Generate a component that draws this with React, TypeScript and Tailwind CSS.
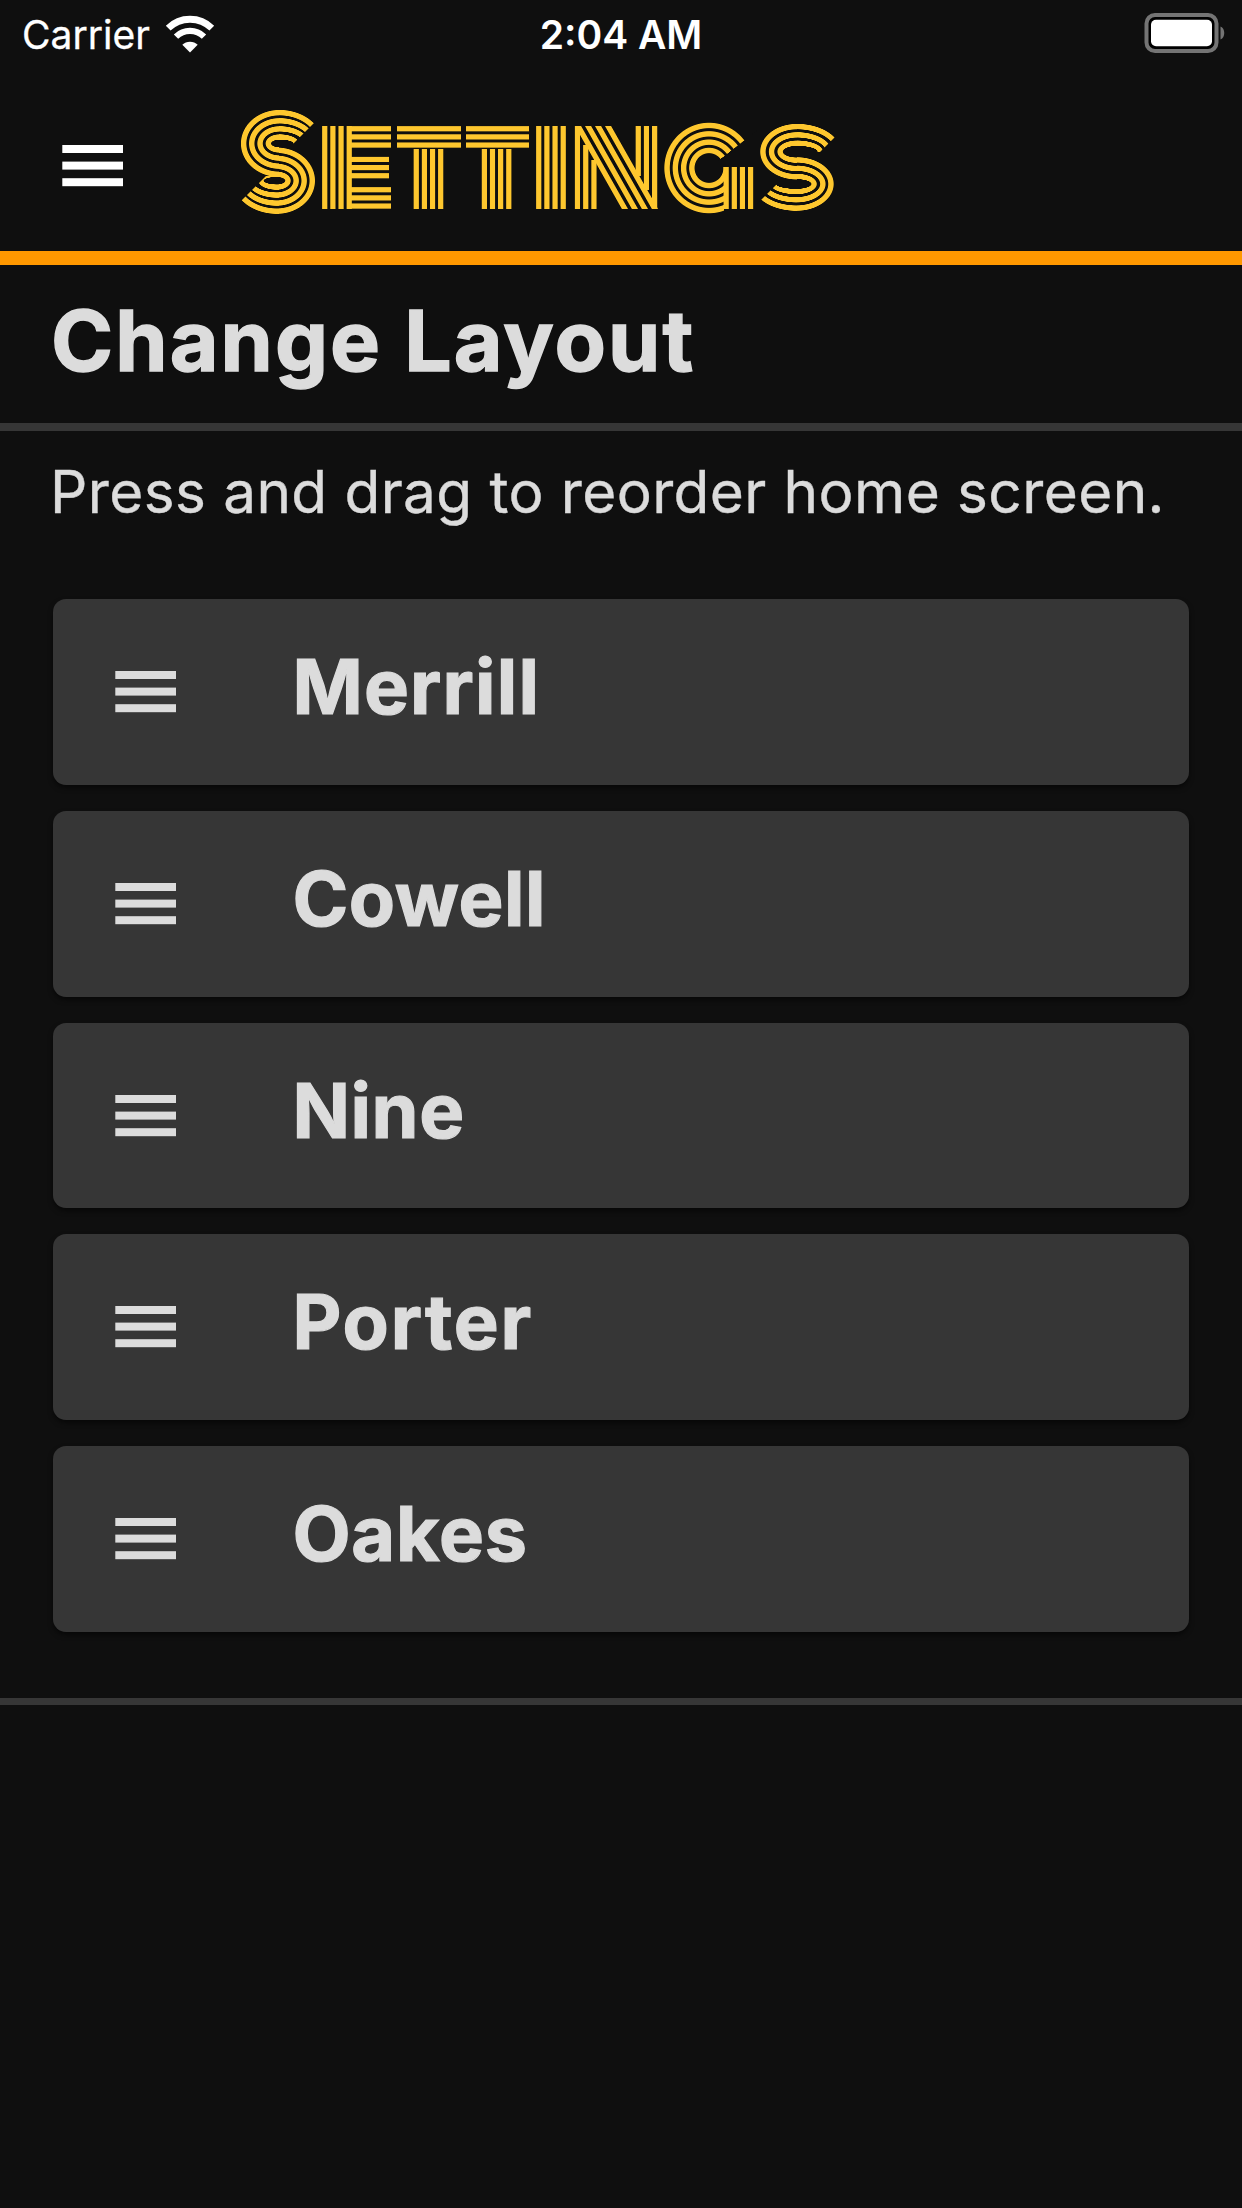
import React from "react";

const INK = "#fec72e";
const PAGE = "#0f0f0f";

/* ---- Striped lettering of the title, built from background layers ---- */

const OX = 238;
const OY = 106;

type Pair = [number, number];

function layer(image: string, x0: number, y0: number, x1: number, y1: number) {
  return `${image} ${x0 - OX}px ${y0 - OY}px / ${x1 - x0}px ${y1 - y0}px no-repeat`;
}

/* n parallel bars of 5.4px at a pitch of 8.15px, starting at `from` */
function bars(dir: "right" | "bottom", from: number, n: number) {
  const stops: string[] = [`transparent ${from - 0.4}px`];
  for (let i = 0; i < n; i++) {
    const a = from + i * 8.15;
    stops.push(`transparent ${a - 0.3}px`, `${INK} ${a + 0.6}px`, `${INK} ${a + 4.9}px`, `transparent ${a + 5.8}px`);
  }
  return `linear-gradient(to ${dir}, ${stops.join(", ")})`;
}

function columns(x: number, n: number, y0: number, y1: number) {
  const x0 = Math.floor(x) - 1;
  return layer(bars("right", x - x0, n), x0, y0, x0 + Math.ceil(n * 8.15) + 2, y1);
}

function rows(y: number, n: number, x0: number, x1: number) {
  const y0 = Math.floor(y) - 1;
  return layer(bars("bottom", y - y0, n), x0, y0, x1, y0 + Math.ceil(n * 8.15) + 2);
}

/* concentric elliptical rings given by centre-line radii, clipped to a box */
function rings(cx: number, cy: number, radii: Pair[], x0: number, y0: number, x1: number, y1: number) {
  const out: string[] = [];
  const disc = (rx: number, ry: number, c: string) =>
    layer(
      `radial-gradient(${rx + 0.4}px ${ry + 0.4}px at ${cx - x0}px ${cy - y0}px, ${c} calc(100% - 0.9px), transparent 100%)`,
      x0, y0, x1, y1,
    );
  for (const [rx, ry] of radii) {
    out.unshift(disc(rx + 2.7, ry + 2.7, INK));
    out.unshift(disc(rx - 2.7, ry - 2.7, PAGE));
  }
  return out;
}

/* page-coloured half plane: x + y beyond (or before) `sum` */
function cut(side: "after" | "before", sum: number, x0: number, y0: number, x1: number, y1: number) {
  const w = x1 - x0;
  const h = y1 - y0;
  const d = (sum - x0 - y0 - (w + h) / 2) / Math.SQRT2;
  const a = side === "after" ? "transparent" : PAGE;
  const b = side === "after" ? PAGE : "transparent";
  return layer(
    `linear-gradient(135deg, ${a} calc(50% + ${d - 0.5}px), ${b} calc(50% + ${d + 0.5}px))`,
    x0, y0, x1, y1,
  );
}

function diagonal() {
  const stops: string[] = [];
  [-13.05, -4.35, 4.35, 13.05].forEach((c, i) => {
    const gap = i === 0 ? "transparent" : PAGE;
    stops.push(`${gap} calc(50% + ${c - 3.1}px)`, `${INK} calc(50% + ${c - 2.2}px)`, `${INK} calc(50% + ${c + 2.2}px)`);
    stops.push(`${i === 3 ? "transparent" : PAGE} calc(50% + ${c + 3.1}px)`);
  });
  return layer(`linear-gradient(60.5deg, ${stops.join(", ")})`, 575, 126, 658, 209);
}

const titleLayers = [
  /* S */
  cut("after", 437, 279, 108, 320, 144),
  cut("before", 442, 238, 176, 277, 216),
  ...rings(279.3, 143.5, [[35.7, 30.8], [27.6, 22.6], [19.3, 14.5], [11, 6.3]], 238, 108, 279, 176),
  ...rings(279.3, 143.5, [[40.6, 30.8], [34, 22.6], [27, 14.5], [17, 6.3]], 279, 108, 320, 144),
  ...rings(277, 180.7, [[35.3, 30.4], [27.2, 22.3], [19.2, 14.2], [11, 6.2]], 279, 144, 320, 216),
  ...rings(277, 180.7, [[41, 30.4], [34, 22.3], [27, 14.2], [16, 6.2]], 238, 176, 279, 216),
  /* E */
  columns(322, 4, 126, 209),
  rows(126, 3, 350, 391),
  rows(156.7, 3, 350, 389),
  rows(187, 3, 350, 391),
  /* T T */
  rows(126, 3, 397, 461),
  columns(413.5, 4, 149, 209),
  rows(126, 3, 466, 529),
  columns(481.6, 4, 149, 209),
  /* I */
  columns(536, 4, 126, 209),
  /* N */
  diagonal(),
  columns(574.7, 1, 126, 209),
  columns(583, 1, 145, 209),
  columns(591.2, 1, 160, 209),
  columns(635.5, 1, 126, 176),
  columns(643.7, 1, 126, 190),
  columns(651.9, 1, 126, 209),
  /* G */
  columns(723.4, 4, 167, 209),
  layer(`conic-gradient(from 0deg at 0px 60px, transparent 51.5deg, ${PAGE} 52.5deg)`, 709, 108, 757, 167),
  ...rings(709, 168, [[42, 42.6], [33.7, 34.2], [25.4, 25.9], [17.2, 17.6]], 663, 108, 724, 216),
  ...rings(709, 168, [[42, 42.6], [33.7, 34.2], [25.4, 25.9], [17.2, 17.6]], 724, 108, 757, 167),
  /* S */
  cut("after", 972, 797, 120, 838, 152),
  cut("before", 961, 757, 181, 797, 216),
  ...rings(796.7, 151.7, [[33.8, 25], [25.2, 16.7], [16.6, 8.3]], 757, 120, 797, 181),
  ...rings(796.7, 151.7, [[41.3, 25], [32, 16.7], [23.6, 8.3]], 797, 120, 838, 152),
  ...rings(796.7, 184, [[34.3, 24], [26.2, 15.6], [17.4, 7.3]], 797, 152, 838, 216),
  ...rings(796.7, 184, [[41, 24], [32.4, 15.6], [23.4, 7.3]], 757, 181, 797, 216),
].join(", ");

function StripedTitle() {
  return (
    <h1
      className="ml-[115px] mt-[2px] h-[110px] w-[602px] whitespace-nowrap text-[108px] leading-[110px] font-black uppercase tracking-[3px] text-transparent [-webkit-text-stroke:70px_transparent]"
      style={{ background: titleLayers, backgroundClip: "text", WebkitBackgroundClip: "text" }}
    >
      Settings
    </h1>
  );
}

/* ---- Icons ---- */

function MenuIcon({ className }: { className?: string }) {
  return (
    <svg className={className} width="61" height="42" viewBox="0 0 61 42" fill="currentColor">
      <rect x="0.3" width="60.7" height="8" />
      <rect x="0.3" y="16.6" width="60.7" height="8" />
      <rect x="0.3" y="33.2" width="60.7" height="8" />
    </svg>
  );
}

function WifiIcon() {
  return (
    <svg width="50" height="38" viewBox="0 0 50 38" fill="none" stroke="#fff" className="-mt-[2px]">
      <path d="M3.2 13.2 A31 31 0 0 1 46.8 13.2" strokeWidth="6.8" />
      <path d="M11 21.6 A20 20 0 0 1 39 21.6" strokeWidth="6.2" />
      <path d="M25 37.5 L17.3 29.8 A11 11 0 0 1 32.7 29.8 Z" fill="#fff" stroke="none" />
    </svg>
  );
}

function BatteryIcon() {
  return (
    <svg width="82" height="42" viewBox="0 0 82 42" className="-mt-[3px]">
      <rect x="2.5" y="2" width="70" height="36" rx="8.5" fill="#000" stroke="#747474" strokeWidth="4" />
      <rect x="7" y="6.8" width="61" height="26.4" rx="5" fill="#fff" />
      <path d="M76.5 13.5 C81.5 15 81.5 25 76.5 26.5 Z" fill="#747474" />
    </svg>
  );
}

const colleges = [
  { name: "Merrill", tracking: "tracking-[1.2px]" },
  { name: "Cowell", tracking: "tracking-[0.6px]" },
  { name: "Nine", tracking: "tracking-[0.6px]" },
  { name: "Porter", tracking: "tracking-[1.9px]" },
  { name: "Oakes", tracking: "tracking-[0.8px]" },
];

export default function App() {
  return (
    <div className="flex h-[2208px] w-[1242px] flex-col overflow-hidden bg-[#0f0f0f] font-[Inter,sans-serif] text-[#dcdcdc]">
      <div className="grid h-[66px] shrink-0 grid-cols-3 items-center pt-[2px] text-[39px] leading-[66px] text-white">
        <div className="flex items-center pl-[22px]">
          <span className="w-[143px] [-webkit-text-stroke:0.3px_#fff]">Carrier</span>
          <WifiIcon />
        </div>
        <div className="text-center font-semibold">2:04 AM</div>
        <div className="flex justify-end pr-[16px]">
          <BatteryIcon />
        </div>
      </div>

      <header className="flex h-[199px] shrink-0 items-start border-b-[14px] border-[#ff9800] pl-[62px] pt-[38px]">
        <MenuIcon className="mt-[41px] shrink-0 text-white" />
        <StripedTitle />
      </header>

      <section className="flex h-[166px] shrink-0 items-start border-b-[8px] border-[#363636] pl-[51px]">
        <h2 className="mt-[21px] text-[84px] leading-[110px] font-bold tracking-[2.1px] whitespace-nowrap [-webkit-text-stroke:1.4px_#dcdcdc]">Change Layout</h2>
      </section>

      <section className="h-[1274px] shrink-0 border-b-[7px] border-[#363636] px-[53px]">
        <p className="ml-[-3px] mt-[21px] h-[80px] text-[58.5px] leading-[80px] tracking-[0.4px] whitespace-nowrap [-webkit-text-stroke:0.4px_#dcdcdc]">
          Press and drag to reorder home screen.
        </p>
        <ul className="mt-[67px] flex flex-col gap-[26px]">
          {colleges.map(({ name, tracking }) => (
            <li
              key={name}
              className="flex h-[185.8px] items-start rounded-[13px] bg-[#363636] pl-[62.4px] shadow-[0_3px_5px_rgba(0,0,0,0.5)]"
            >
              <MenuIcon className="mt-[72px] shrink-0" />
              <span className={`ml-[116px] mt-[38px] text-[75.5px] leading-[100px] font-bold [-webkit-text-stroke:1.2px_#dcdcdc] ${tracking}`}>{name}</span>
            </li>
          ))}
        </ul>
      </section>
    </div>
  );
}
